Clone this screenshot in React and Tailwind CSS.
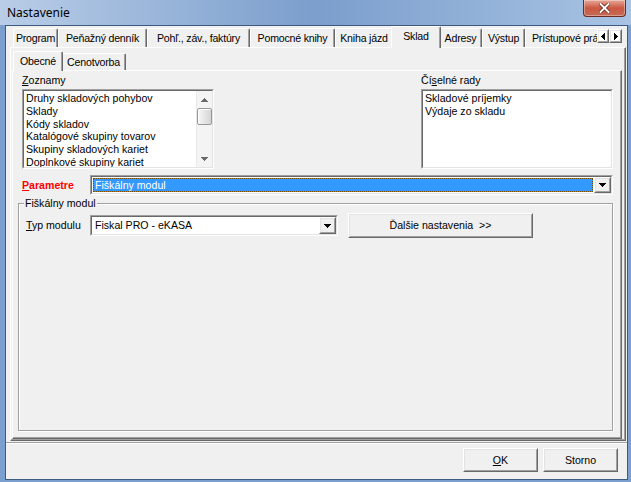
import React from 'react';

const outerTabs = [
  { label: 'Program', w: 'w-[45px]' },
  { label: 'Peňažný denník', w: 'w-[89px]' },
  { label: 'Pohľ., záv., faktúry', w: 'w-[103px]' },
  { label: 'Pomocné knihy', w: 'w-[85px]' },
  { label: 'Kniha jázd', w: 'w-[58px]' },
  { label: 'Sklad', w: 'w-[50px]', active: true },
  { label: 'Adresy', w: 'w-[43px]' },
  { label: 'Výstup', w: 'w-[43px]' },
  { label: 'Prístupové práva', w: 'w-[72px]', clipped: true },
];

const zoznamy = [
  'Druhy skladových pohybov',
  'Sklady',
  'Kódy skladov',
  'Katalógové skupiny tovarov',
  'Skupiny skladových kariet',
  'Doplnkové skupiny kariet',
];

function Tri({ dir = 'down', color = '#000' }) {
  if (dir === 'left' || dir === 'right') {
    const pts = dir === 'left' ? '4,0 4,7 0,3.5' : '0,0 0,7 4,3.5';
    return (
      <svg width="4" height="7" viewBox="0 0 4 7" shapeRendering="crispEdges">
        <polygon points={pts} fill={color} />
      </svg>
    );
  }
  const pts = dir === 'up' ? '0,4 7,4 3.5,0' : '0,0 7,0 3.5,4';
  return (
    <svg width="7" height="4" viewBox="0 0 7 4" shapeRendering="crispEdges">
      <polygon points={pts} fill={color} />
    </svg>
  );
}

function Raised({ className = '', children }) {
  return (
    <div className={`border border-t-white border-l-white border-r-[#696969] border-b-[#696969] bg-[#f0f0f0] ${className}`}>
      <div className="w-full h-full border border-t-[#e3e3e3] border-l-[#e3e3e3] border-r-[#a0a0a0] border-b-[#a0a0a0] flex items-center justify-center">
        {children}
      </div>
    </div>
  );
}

function Sunken({ className = '', children }) {
  return (
    <div className={`border border-t-[#a0a0a0] border-l-[#a0a0a0] border-r-white border-b-white ${className}`}>
      <div className="w-full h-full border border-t-[#696969] border-l-[#696969] border-r-[#e3e3e3] border-b-[#e3e3e3] bg-white flex overflow-hidden">
        {children}
      </div>
    </div>
  );
}

function Tab({ label, w, active, clipped, inner }) {
  if (active) {
    return (
      <div
        className={`relative z-10 -mx-[2px] -mb-px ${w} ${inner ? 'h-[20px]' : 'h-[22px]'} bg-[#f0f0f0] border-l border-t border-r border-l-white border-t-white border-r-[#696969] rounded-t-[2px] shadow-[inset_-1px_0_0_#a0a0a0] flex justify-center pt-[3px] whitespace-nowrap tracking-[-0.2px]`}
      >
        {label}
      </div>
    );
  }
  return (
    <div
      className={`${w} ${inner ? 'h-[17px]' : 'h-[19px]'} border-l border-t border-l-white border-t-white rounded-tl-[2px] flex items-center whitespace-nowrap overflow-hidden tracking-[-0.2px] ${
        clipped
          ? 'pl-[6px]'
          : 'justify-center border-r border-r-[#696969] rounded-tr-[2px] shadow-[inset_-1px_0_0_#a0a0a0]'
      }`}
    >
      {label}
    </div>
  );
}

function DropButton() {
  return (
    <Raised className="w-[17px] h-full shrink-0">
      <Tri />
    </Raised>
  );
}

export default function App() {
  return (
    <div className="w-[631px] h-[482px] flex flex-col bg-[#7b9fce] font-['Liberation_Sans',Arial,sans-serif] text-[10.6px] leading-[13px] text-black overflow-hidden">
      {/* title bar */}
      <div className="h-[25px] shrink-0 flex bg-linear-to-r from-[#b9cde7] via-[#7b9ecc] via-50% to-[#a8c3e3]">
        <div className="self-center pl-[7px] font-['Noto_Sans',sans-serif] text-[12px] leading-[16px]">Nastavenie</div>
        <div className="ml-auto mr-[5px] w-[43px] h-[17px] rounded-b-[4px] border border-t-0 border-[#6e2a20] bg-linear-to-b from-[#e6a898] via-[#cb5842] to-[#c46a55] flex items-center justify-center shadow-[inset_0_0_0_1px_rgba(255,255,255,0.35)]">
          <svg width="11" height="10" viewBox="0 0 11 10">
            <path d="M1.5 1 L9.5 9 M9.5 1 L1.5 9" stroke="#5a1a12" strokeWidth="3.4" strokeLinecap="square" />
            <path d="M1.5 1 L9.5 9 M9.5 1 L1.5 9" stroke="#ffffff" strokeWidth="2" strokeLinecap="square" />
          </svg>
        </div>
      </div>

      {/* frame + client */}
      <div className="flex-1 flex pl-[5px] pr-[3px] pb-[2px]">
        <div className="flex-1 border border-[#3d5a80] bg-[#f0f0f0] flex flex-col">
          {/* outer tab control */}
          <div className="ml-[4px] mr-[1px]">
            <div className="h-[21px] flex items-end pl-[3px]">
              {outerTabs.map((t) => (
                <Tab key={t.label} {...t} />
              ))}
              <div className="self-start mt-[3px] flex">
                <Raised className="w-[12px] h-[14px] bg-white">
                  <Tri dir="left" />
                </Raised>
                <Raised className="w-[13px] h-[14px] bg-white">
                  <Tri dir="right" />
                </Raised>
              </div>
            </div>

            <div className="h-[394px] border border-t-white border-l-white border-r-[#696969] border-b-[#696969] shadow-[inset_-1px_-1px_0_#a0a0a0] flex flex-col">
              {/* inner tab control */}
              <div className="ml-px mr-[3px] mt-[3px] mb-px flex-1 flex flex-col">
                <div className="h-[19px] flex items-end pl-[3px]">
                  <Tab label="Obecné" w="w-[50px]" active inner />
                  <Tab label="Cenotvorba" w="w-[65px]" inner />
                </div>

                <div className="flex-1 border border-t-white border-l-white border-r-[#696969] border-b-[#696969] shadow-[inset_-1px_-1px_0_#a0a0a0] flex flex-col pt-[3px]">
                  {/* lists */}
                  <div className="flex justify-between pl-[9px] pr-[8px]">
                    <div className="w-[192px]">
                      <div className="h-[13px]">
                        <span className="underline">Z</span>oznamy
                      </div>
                      <Sunken className="mt-[2px] h-[80px]">
                        <div className="flex-1 pl-[2px] pt-px whitespace-nowrap overflow-hidden">
                          {zoznamy.map((z) => (
                            <div key={z} className="h-[12.8px] leading-[12.8px]">
                              {z}
                            </div>
                          ))}
                        </div>
                        <div className="w-[16px] shrink-0 bg-[#f4f4f4] border-l border-[#e8e8e8] flex flex-col items-center">
                          <div className="h-[17px] flex items-center justify-center">
                            <Tri dir="up" color="#6b6b6b" />
                          </div>
                          <div className="w-[15px] h-[17px] rounded-[2px] border border-[#979797] bg-linear-to-r from-[#f7f7f7] to-[#d4d4d4] shadow-[inset_1px_1px_0_#ffffff]" />
                          <div className="flex-1" />
                          <div className="h-[17px] flex items-center justify-center">
                            <Tri dir="down" color="#6b6b6b" />
                          </div>
                        </div>
                      </Sunken>
                    </div>

                    <div className="w-[192px]">
                      <div className="h-[13px]">
                        Čí<span className="underline">s</span>elné rady
                      </div>
                      <Sunken className="mt-[2px] h-[80px]">
                        <div className="flex-1 pl-[2px] pt-px">
                          <div className="h-[12.8px] leading-[12.8px]">Skladové príjemky</div>
                          <div className="h-[12.8px] leading-[12.8px]">Výdaje zo skladu</div>
                        </div>
                      </Sunken>
                    </div>
                  </div>

                  {/* parametre */}
                  <div className="mt-[6px] h-[20px] flex items-center pl-[9px] pr-[8px]">
                    <div className="w-[68px] font-bold text-[#ff0000]">
                      <span className="underline">P</span>arametre
                    </div>
                    <Sunken className="flex-1 h-full">
                      <div className="flex-1 p-px">
                        <div className="h-full bg-[#3399ff] text-white pl-[2px] flex items-center outline-1 outline-dotted outline-[#7a4a00] -outline-offset-1">
                          Fiškálny modul
                        </div>
                      </div>
                      <DropButton />
                    </Sunken>
                  </div>

                  {/* group box */}
                  <div className="relative mt-[8px] ml-[5px] mr-[8px] mb-[7px] flex-1 border border-[#a0a0a0] shadow-[1px_1px_0_#ffffff,inset_1px_1px_0_#ffffff]">
                    <div className="absolute -top-[7px] left-[5px] px-px bg-[#f0f0f0]">Fiškálny modul</div>
                    <div className="mt-[9px] h-[25px] flex items-center pl-[7px]">
                      <div className="w-[64px]">
                        <span className="underline">T</span>yp modulu
                      </div>
                      <Sunken className="w-[248px] h-[21px]">
                        <div className="flex-1 pl-[3px] flex items-center">Fiskal PRO - eKASA</div>
                        <DropButton />
                      </Sunken>
                      <Raised className="ml-[10px] w-[185px] h-[25px]">
                        <span>Ďalšie nastavenia&nbsp;&nbsp;&gt;&gt;</span>
                      </Raised>
                    </div>
                  </div>
                </div>
              </div>
            </div>
          </div>

          {/* bottom */}
          <div className="mt-[1px] h-[2px] border-t border-t-[#a0a0a0] border-b border-b-white" />
          <div className="mt-[4px] flex justify-end gap-[5px] pr-[9px]">
            <Raised className="w-[75px] h-[24px]">
              <span>
                <span className="underline">O</span>K
              </span>
            </Raised>
            <Raised className="w-[75px] h-[24px]">Storno</Raised>
          </div>
        </div>
      </div>
    </div>
  );
}
